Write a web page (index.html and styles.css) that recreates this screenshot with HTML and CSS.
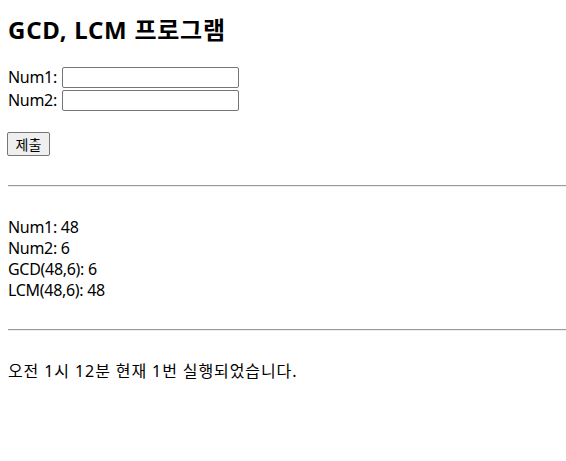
FILE: index.html
```html
<!DOCTYPE html>
<html lang="ko">
<head>
<meta charset="utf-8">
<title>GCD, LCM 프로그램</title>
<link rel="stylesheet" href="styles.css">
</head>
<body>
<h1 class="title">GCD, LCM 프로그램</h1>
<form class="form">
  <div class="row"><label class="label">Num1: </label><input class="field" type="text"></div>
  <div class="row"><label class="label">Num2: </label><input class="field" type="text"></div>
  <div class="actions"><button class="submit" type="button">제출</button></div>
</form>
<hr class="rule rule-first">
<div class="result">
  <div class="line">Num1: 48</div>
  <div class="line">Num2: 6</div>
  <div class="line">GCD(48,6): 6</div>
  <div class="line">LCM(48,6): 48</div>
</div>
<hr class="rule">
<p class="status">오전 1시 12분 현재 1번 실행되었습니다.</p>
</body>
</html>
```

FILE: styles.css
```css
html, body {
  margin: 0;
  padding: 0;
  background: #fff;
}
body {
  padding-left: 8px;
  font-family: "Noto Sans", "Noto Sans CJK KR", sans-serif;
  font-size: 16px;
  line-height: 21px;
  color: #000;
}
.title {
  margin: 14px 0 0 0;
  font-size: 24px;
  line-height: 32px;
  font-weight: bold;
  letter-spacing: 0.75px;
}
.form {
  margin-top: 20px;
}
.row {
  display: flex;
  align-items: center;
  height: 23px;
}
.label {
  white-space: pre;
  width: 54px;
  letter-spacing: -0.3px;
}
.field {
  box-sizing: border-box;
  width: 177px;
  height: 21px;
  margin: 0;
  border: 1px solid #767676;
  border-radius: 2px;
  padding: 1px 2px;
  font: inherit;
}
.actions {
  margin-top: 20px;
  height: 24px;
}
.submit {
  box-sizing: border-box;
  height: 24px;
  width: 43px;
  margin: 0 0 0 -1px;
  padding: 0;
  border: 1px solid #767676;
  border-radius: 2px;
  background: #efefef;
  font-family: "Noto Sans CJK KR", sans-serif;
  font-size: 14px;
  color: #000;
}
.rule {
  margin: 28px 0 0 0;
  border: 0;
  border-top: 1px solid #9a9a9a;
  border-bottom: 1px solid #eeeeee;
  height: 0;
}
.rule-first {
  margin-top: 29px;
}
.result {
  margin-top: 30px;
  letter-spacing: -0.3px;
}
.status {
  margin: 30px 0 0 0;
  letter-spacing: 0.9px;
}
```
